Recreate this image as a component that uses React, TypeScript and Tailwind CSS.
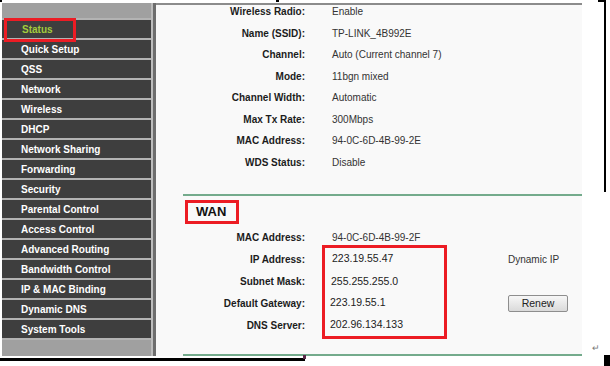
import React from 'react';

const menu = [
  'Status',
  'Quick Setup',
  'QSS',
  'Network',
  'Wireless',
  'DHCP',
  'Network Sharing',
  'Forwarding',
  'Security',
  'Parental Control',
  'Access Control',
  'Advanced Routing',
  'Bandwidth Control',
  'IP & MAC Binding',
  'Dynamic DNS',
  'System Tools',
];

const wireless: [string, string][] = [
  ['Wireless Radio:', 'Enable'],
  ['Name (SSID):', 'TP-LINK_4B992E'],
  ['Channel:', 'Auto (Current channel 7)'],
  ['Mode:', '11bgn mixed'],
  ['Channel Width:', 'Automatic'],
  ['Max Tx Rate:', '300Mbps'],
  ['MAC Address:', '94-0C-6D-4B-99-2E'],
  ['WDS Status:', 'Disable'],
];

const App = () => {
  return (
    <div
      className="relative w-[610px] h-[366px] bg-white overflow-hidden"
      style={{ fontFamily: '"Liberation Sans", Arial, sans-serif' }}
    >
      <div className="flex pt-[3px] pl-[2px] h-[356px]">
        {/* left menu */}
        <div className="w-[149px] flex flex-col bg-[#a0a0a0]">
          <div className="h-[15px]" />
          {menu.map((item, i) => (
            <div key={item} className="h-[20px] border-t-2 border-[#b3b3b3] bg-[#3e3e3e] flex items-center">
              <span
                className={
                  i === 0
                    ? 'pl-[20px] text-[10px] font-bold text-[#a3cb3c]'
                    : 'pl-[19px] text-[10px] font-bold text-white'
                }
              >
                {item}
              </span>
            </div>
          ))}
          <div className="flex-1 border-t-2 border-[#b3b3b3]" />
        </div>
        <div className="w-[2px] bg-[#bdbdbd]" />
        <div className="w-[3px] bg-[#6e6e6e]" />

        {/* content */}
        <div className="w-[426px] bg-[#f9f9f9] border-t-2 border-[#8c8c8c] flex flex-col">
          <div className="-mt-[4px]">
            {wireless.map(([label, value]) => (
              <div key={label} className="h-[21.5px] flex items-center text-[10px]">
                <div className="w-[149px] text-right font-bold text-[#1c1c1c]">{label}</div>
                <div className="ml-[27px] text-[#333]">{value}</div>
              </div>
            ))}
          </div>

          <div className="mt-[21px] ml-[27px] h-[2px] bg-[#74ab8c]" />

          <div className="mt-[4px] ml-[29px] w-[54px] h-[24px] border-[3px] border-[#ec1c24] flex items-center pl-[8px]">
            <span className="text-[13px] font-bold text-[#111]">WAN</span>
          </div>

          <div className="relative mt-[2px]">
            <div className="h-[22px] flex items-center text-[10px]">
              <div className="w-[149px] text-right font-bold text-[#1c1c1c]">MAC Address:</div>
              <div className="ml-[27px] text-[#333]">94-0C-6D-4B-99-2F</div>
            </div>
            <div className="h-[22px] flex items-center text-[10px]">
              <div className="w-[149px] text-right font-bold text-[#1c1c1c]">IP Address:</div>
              <div className="ml-[27px] w-[176px] text-[10.5px] text-[#222]">223.19.55.47</div>
              <div className="text-[#333]">Dynamic IP</div>
            </div>
            <div className="h-[22px] flex items-center text-[10px]">
              <div className="w-[149px] text-right font-bold text-[#1c1c1c]">Subnet Mask:</div>
              <div className="ml-[26px] pt-[2px] text-[10.5px] text-[#222]">255.255.255.0</div>
            </div>
            <div className="h-[22px] flex items-center text-[10px]">
              <div className="w-[149px] text-right font-bold text-[#1c1c1c]">Default Gateway:</div>
              <div className="ml-[25px] w-[178px] text-[10.5px] text-[#222]">223.19.55.1</div>
              <button className="w-[60px] h-[17px] border border-[#8e8e8e] rounded-[2px] bg-gradient-to-b from-[#f7f7f7] to-[#dadada] text-[10.5px] text-[#222] leading-none">
                Renew
              </button>
            </div>
            <div className="h-[22px] flex items-center text-[10px]">
              <div className="w-[149px] text-right font-bold text-[#1c1c1c]">DNS Server:</div>
              <div className="ml-[25px] text-[10.5px] text-[#222]">202.96.134.133</div>
            </div>

            {/* highlight around address values */}
            <div className="absolute left-[166px] top-[19px] w-[125px] h-[94px] border-[3px] border-[#ec1c24]" />
          </div>

          <div className="mt-auto ml-[27px] h-[2px] bg-[#74ab8c]" />
        </div>
      </div>

      {/* highlight around Status */}
      <div className="absolute left-[4px] top-[18px] w-[72px] h-[24px] border-[3px] border-[#ec1c24]" />

      {/* page marks from the document */}
      <div className="absolute left-0 top-0 w-[2px] h-[2px] bg-black" />
      <div className="absolute left-[276px] top-0 w-[3px] h-[2px] bg-black" />
      <div className="absolute left-[598px] top-0 w-[8px] h-[2px] bg-black" />
      <div className="absolute left-[604px] top-0 w-[2px] h-[192px] bg-black" />
      <div className="absolute left-0 top-[358px] w-[305px] h-[3px] bg-black" />
      <div className="absolute left-[303px] top-[355px] w-[3px] h-[4px] bg-[#5a2a4a]" />
      <div className="absolute left-[604px] top-[355px] w-[6px] h-[11px] bg-black" />
      <div className="absolute left-[592px] top-[344px] text-[9px] text-[#777] leading-none">↵</div>
    </div>
  );
};

export default App;
